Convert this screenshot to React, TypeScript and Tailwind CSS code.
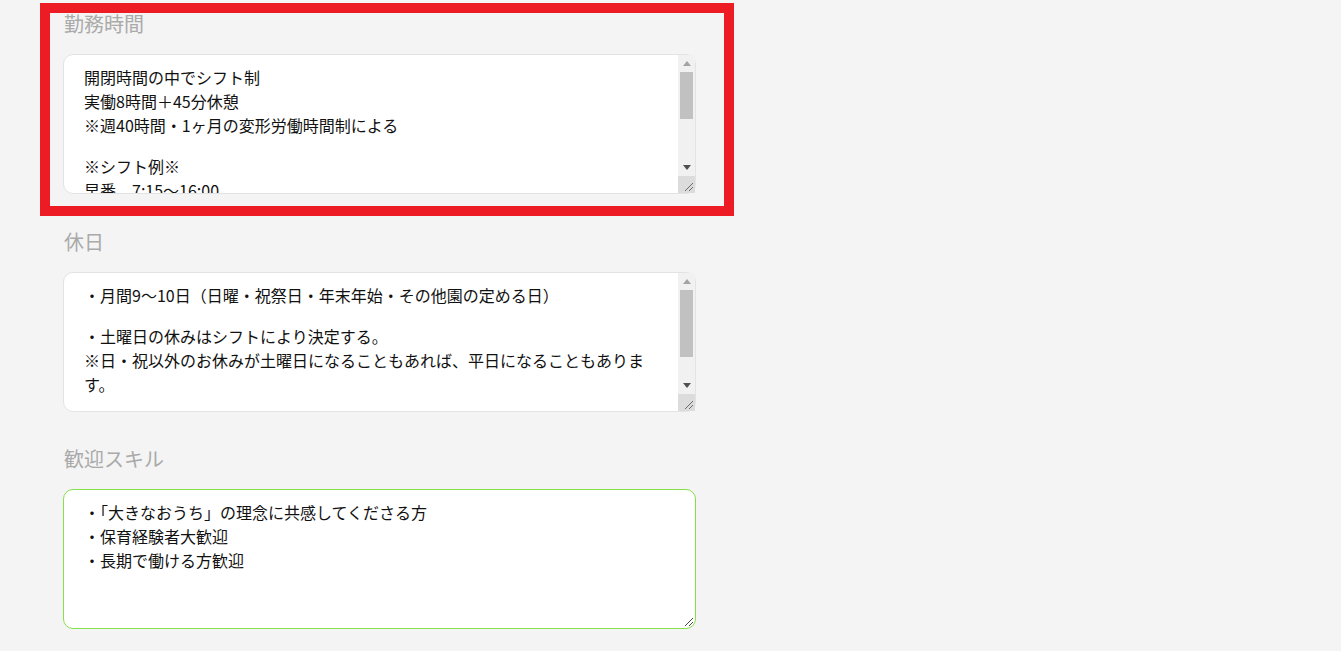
const Arrow = ({ up, color }: { up?: boolean; color: string }) => (
  <div className="flex h-[17px] items-center justify-center">
    <svg width="8" height="5" viewBox="0 0 8 5">
      <polygon points={up ? "0,5 4,0 8,5" : "0,0 8,0 4,5"} fill={color} />
    </svg>
  </div>
);

const Grip = ({ color }: { color: string }) => (
  <svg width="9" height="9" viewBox="0 0 9 9">
    <line x1="1" y1="9" x2="9" y2="1" stroke={color} strokeWidth="1" />
    <line x1="5" y1="9" x2="9" y2="5" stroke={color} strokeWidth="1" />
  </svg>
);

const Scrollbar = ({ thumb }: { thumb: string }) => (
  <div className="flex w-[17px] shrink-0 flex-col bg-[#f1f1f1]">
    <Arrow up color="#a3a3a3" />
    <div className="flex-1 px-[2px]">
      <div className={`${thumb} bg-[#c1c1c1]`}></div>
    </div>
    <Arrow color="#505050" />
    <div className="flex h-[17px] items-end justify-end bg-[#dcdcdc] pb-[2px] pr-[2px]">
      <Grip color="#6b6b6b" />
    </div>
  </div>
);

const Field = ({
  label,
  className = "",
  children,
}: {
  label: string;
  className?: string;
  children: React.ReactNode;
}) => (
  <section className={className}>
    <h2 className="mb-[15px] pl-[1px] text-[20px] leading-[30px] font-normal text-[#aaaaaa]">
      {label}
    </h2>
    {children}
  </section>
);

const Gap = () => <div className="h-[17px]"></div>;

export default function App() {
  return (
    <div className="relative min-h-[651px] bg-[#f4f4f4] font-['Noto_Sans_CJK_JP',sans-serif]">
      <div className="flex w-[696px] flex-col pl-[63px] pt-[9px]">
        <Field label="勤務時間" className="mb-[33px]">
          <div className="flex h-[140px] rounded-[10px] border border-[#e3e3e3] bg-white">
            <div className="flex-1 overflow-hidden pl-[20px] pr-[16px] pt-[10px] text-[16px] leading-[24px] text-[#111]">
              <p>開閉時間の中でシフト制</p>
              <p>実働8時間＋45分休憩</p>
              <p>※週40時間・1ヶ月の変形労働時間制による</p>
              <Gap />
              <p>※シフト例※</p>
              <p>早番　7:15～16:00</p>
            </div>
            <Scrollbar thumb="h-[47px]" />
          </div>
        </Field>

        <Field label="休日" className="mb-[32px]">
          <div className="flex h-[140px] rounded-[10px] border border-[#e3e3e3] bg-white">
            <div className="flex-1 overflow-hidden pl-[20px] pr-[16px] pt-[10px] text-[16px] leading-[24px] text-[#111]">
              <p>・月間9～10日（日曜・祝祭日・年末年始・その他園の定める日）</p>
              <Gap />
              <p>・土曜日の休みはシフトにより決定する。</p>
              <p>※日・祝以外のお休みが土曜日になることもあれば、平日になることもあります。</p>
            </div>
            <Scrollbar thumb="h-[67px]" />
          </div>
        </Field>

        <Field label="歓迎スキル">
          <div className="relative h-[140px] rounded-[10px] border border-[#86e04a] bg-white">
            <div className="h-full overflow-hidden pl-[20px] pr-[16px] pt-[10px] text-[16px] leading-[24px] text-[#111]">
              <p>・「大きなおうち」の理念に共感してくださる方</p>
              <p>・保育経験者大歓迎</p>
              <p>・長期で働ける方歓迎</p>
            </div>
            <div className="absolute bottom-[2px] right-[2px]">
              <Grip color="#4a4a4a" />
            </div>
          </div>
        </Field>
      </div>

      {/* annotation box over the first field */}
      <div className="pointer-events-none absolute left-[40px] top-[3px] h-[213px] w-[694px] border-[10px] border-[#ed1c24]"></div>
    </div>
  );
}
